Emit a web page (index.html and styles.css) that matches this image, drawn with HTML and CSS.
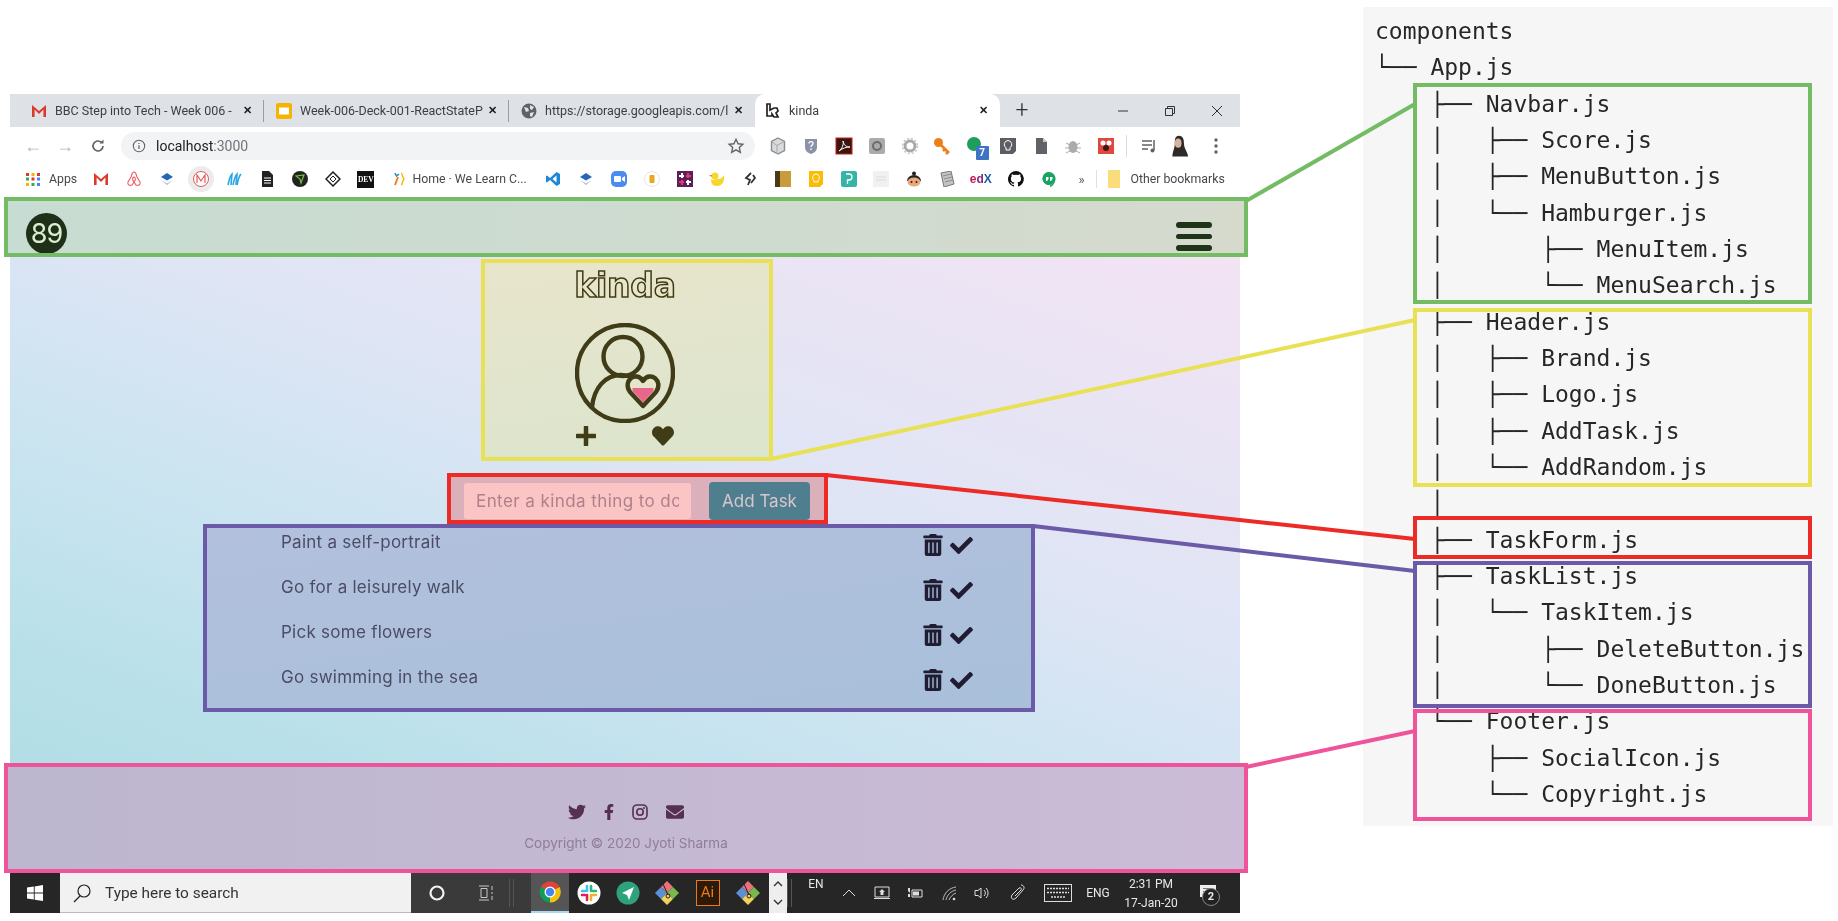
FILE: index.html
```html
<!DOCTYPE html>
<html lang="en">
<head>
<meta charset="utf-8">
<title>kinda component tree</title>
<link rel="stylesheet" href="styles.css">
</head>
<body>
<div class="stage">
  <div class="browser">
    <div class="tabs">
      <div class="tab tab1">
        <svg class="fav" viewBox="0 0 16 16"><path d="M1 14V2l7 6 7-6v12h-2.600V6.500L8 11 3.600 6.500V14z" fill="#d93a2b"/></svg>
        <span class="tab-title">BBC Step into Tech - Week 006 -</span><span class="tab-x">✕</span>
      </div>
      <div class="tab tab2">
        <svg class="fav" viewBox="0 0 16 16"><rect width="16" height="16" rx="2" fill="#f4b400"/><rect x="3" y="4.500" width="10" height="7" fill="#fff"/></svg>
        <span class="tab-title">Week-006-Deck-001-ReactStateP</span><span class="tab-x">✕</span>
      </div>
      <div class="tab tab3">
        <svg class="fav" viewBox="0 0 16 16"><circle cx="8" cy="8" r="7.500" fill="#5f6368"/><path d="M3 4l4 1 1 3-3 1zM9 2l4 2-2 3-2-1zM9 10l4-1-2 5-2-1z" fill="#dee1e6"/></svg>
        <span class="tab-title">https://storage.googleapis.com/l</span><span class="tab-x">✕</span>
      </div>
      <div class="tab tab-active">
        <svg class="fav" viewBox="0 0 16 16"><path d="M2 1h3v6l4-2h3l1 3-2 2 2 4H9L7 11v2H2z" fill="none" stroke="#222" stroke-width="1.700"/></svg>
        <span class="tab-title">kinda</span><span class="tab-x">✕</span>
      </div>
      <span class="tab-plus">+</span>
      <div class="winctl">
        <svg viewBox="0 0 14 14"><path d="M2 7h10" stroke="#333" fill="none"/></svg>
        <svg viewBox="0 0 14 14"><path d="M2.500 4.500h7v7h-7zM4.500 4.500v-2h7v7h-2" stroke="#333" fill="none"/></svg>
        <svg viewBox="0 0 14 14"><path d="M2 2l10 10M12 2L2 12" stroke="#333" fill="none"/></svg>
      </div>
    </div>

    <div class="toolbar">
      <span class="nav-btn muted">←</span>
      <span class="nav-btn muted">→</span>
      <svg class="nav-svg" viewBox="0 0 16 16"><path d="M13 8a5 5 0 1 1-1.500-3.600" fill="none" stroke="#5f6368" stroke-width="1.600"/><path d="M13.500 1.500v4h-4z" fill="#5f6368"/></svg>
      <div class="omnibox">
        <svg class="info" viewBox="0 0 16 16"><circle cx="8" cy="8" r="6.500" fill="none" stroke="#5f6368" stroke-width="1.200"/><path d="M8 7v4.500M8 4.500v1.300" stroke="#5f6368" stroke-width="1.400"/></svg>
        <span class="url">localhost<span class="url-port">:3000</span></span>
        <svg class="star" viewBox="0 0 24 24"><path d="M12 3l2.800 6 6.400.7-4.800 4.300 1.400 6.500L12 17.200 6.200 20.500 7.600 14 2.800 9.700 9.200 9z" fill="none" stroke="#5f6368" stroke-width="1.800"/></svg>
      </div>
      <div class="exts">
        <svg class="ext" viewBox="0 0 18 18"><path d="M9 1l6.500 3.500v9L9 17l-6.500-3.500v-9z" fill="#d8dadc" stroke="#8a8d90" stroke-width="1.400"/><path d="M8 8.500V17M2.500 4.500L8 8.500l7-4" fill="none" stroke="#a5a8ab"/></svg>
        <svg class="ext" viewBox="0 0 18 18"><path d="M3 2h12v8c0 4-3 6-6 7-3-1-6-3-6-7z" fill="#8a94a6"/><path d="M7 6.500c0-2.500 4-2.500 4 0 0 1.500-2 1.500-2 3.500M9 11.500v1.500" fill="none" stroke="#fff" stroke-width="1.400"/></svg>
        <svg class="ext" viewBox="0 0 18 18"><rect x="1" y="1" width="16" height="16" fill="#3a1613" stroke="#c91d17"/><path d="M4 14c3-2 5-7 4-10 1 4 3 6 7 6-4 0-7 1-11 4z" fill="none" stroke="#fff"/></svg>
        <svg class="ext" viewBox="0 0 18 18"><rect x="1" y="1" width="16" height="16" rx="2" fill="#a9abad"/><path d="M5 9a4 4 0 0 1 8 0M13 9a4 4 0 0 1-8 0" fill="none" stroke="#6a6c6e" stroke-width="2"/></svg>
        <svg class="ext" viewBox="0 0 18 18"><circle cx="9" cy="9" r="5" fill="none" stroke="#a8a8a8" stroke-width="3"/><circle cx="9" cy="9" r="7.500" fill="none" stroke="#c4c4c4" stroke-width="1.500" stroke-dasharray="2 2"/></svg>
        <svg class="ext" viewBox="0 0 18 18"><circle cx="5.500" cy="5.500" r="4.500" fill="#ef7d1a"/><path d="M8 8l8 8M12 12l-2 2M15 15l-2 2" stroke="#ef7d1a" stroke-width="2.600" fill="none"/></svg>
        <span class="ext-badge"><svg class="ext" viewBox="0 0 18 18"><circle cx="8" cy="7" r="7" fill="#1e9e5a"/></svg><span class="badge">7</span></span>
        <svg class="ext" viewBox="0 0 18 18"><path d="M1 1h16v13l-3 3H1z" fill="#5b5f63"/><path d="M9 3.500a4 4 0 0 1 2 7.300V13H7v-2.200a4 4 0 0 1 2-7.300z" fill="none" stroke="#fff"/></svg>
        <svg class="ext" viewBox="0 0 18 18"><path d="M4 1h7l4 4v12H4z" fill="#5f6368"/><path d="M11 1v4h4" fill="#c8cacc"/></svg>
        <svg class="ext" viewBox="0 0 18 18"><ellipse cx="9" cy="10" rx="4.500" ry="6" fill="#a9abad"/><path d="M2 6l4 2M16 6l-4 2M1 11h4M17 11h-4M2 16l4-2M16 16l-4-2" stroke="#a9abad"/></svg>
        <svg class="ext" viewBox="0 0 18 18"><rect x="1" y="1" width="16" height="16" fill="#e2473f"/><circle cx="6" cy="6" r="2.500" fill="#fff"/><circle cx="12" cy="6" r="2.500" fill="#fff"/><circle cx="9" cy="11" r="3" fill="#3a1a18"/></svg>
      </div>
      <span class="tool-sep"></span>
      <svg class="tool-ico" viewBox="0 0 18 18"><path d="M2 4h10M2 8h10M2 12h6" stroke="#5f6368" stroke-width="1.500" fill="none"/><path d="M14 3v10" stroke="#5f6368" stroke-width="1.500"/><circle cx="12.500" cy="13.500" r="2" fill="#5f6368"/></svg>
      <svg class="avatar" viewBox="0 0 24 28"><path d="M12 1c5 0 6 5 6 10 0 5 4 9 5 15H4c0-6 3-10 3-15 0-5 0-10 5-10z" fill="#2f2a28"/><ellipse cx="11" cy="10" rx="4" ry="5.500" fill="#d6b49e"/></svg>
      <svg class="tool-dots" viewBox="0 0 6 18"><circle cx="3" cy="3" r="1.700" fill="#5f6368"/><circle cx="3" cy="9" r="1.700" fill="#5f6368"/><circle cx="3" cy="15" r="1.700" fill="#5f6368"/></svg>
    </div>

    <div class="bookmarks">
      <svg class="bm bm-first" viewBox="0 0 16 16"><path d="M1 2h3v3H1z" fill="#e0382c"/><path d="M6.500 2h3v3h-3z" fill="#f4b400"/><path d="M12 2h3v3h-3z" fill="#e0382c"/><path d="M1 6.500h3v3H1z" fill="#34a853"/><path d="M6.500 6.500h3v3h-3z" fill="#e0382c"/><path d="M12 6.500h3v3h-3z" fill="#4285f4"/><path d="M1 12h3v3H1z" fill="#f4b400"/><path d="M6.500 12h3v3h-3z" fill="#34a853"/><path d="M12 12h3v3h-3z" fill="#4285f4"/></svg>
      <span class="bm-text bm-apps">Apps</span>
      <svg class="bm" viewBox="0 0 16 16"><path d="M1 14V2l7 6 7-6v12h-2.600V6.500L8 11 3.600 6.500V14z" fill="#d93a2b"/></svg>
      <svg class="bm" viewBox="0 0 16 16"><path d="M8 1c-2 0-2 2-3 5L2 11c-1 3 2 4 4 3l2-3 2 3c2 1 5 0 4-3l-3-5c-1-3-1-5-3-5zM8 6c2 0 1.500 4 0 5-1.500-1-2-5 0-5z" fill="none" stroke="#ef5a60" stroke-width="1.100"/></svg>
      <svg class="bm" viewBox="0 0 16 16"><path d="M8 2l6 4-6 3.500L2 6z" fill="#2566b8"/><path d="M2 9l6 5 6-5-6 3.500z" fill="#9fb9d8"/></svg>
      <span class="bm-round"><svg class="bm-m" viewBox="0 0 18 18"><circle cx="9" cy="9" r="7.500" fill="#fff" stroke="#e35a5a"/><path d="M5 13V5l4 6 4-6v8" fill="none" stroke="#e35a5a" stroke-width="1.200"/></svg></span>
      <svg class="bm" viewBox="0 0 16 16"><path d="M2 14c1-5 2-9 4-11 0 3-1 8-1 11M7 14c1-5 2-9 4-11 0 3-1 8-1 11M11 14c1-5 2-9 4-11" fill="none" stroke="#2ba7e0" stroke-width="1.600"/></svg>
      <svg class="bm" viewBox="0 0 16 16"><path d="M3 0h7l4 4v12H3z" fill="#222"/><path d="M5 7h7M5 9.500h7M5 12h7" stroke="#fff"/></svg>
      <svg class="bm" viewBox="0 0 16 16"><circle cx="8" cy="8" r="8" fill="#222"/><path d="M4 5l8-1-3 8-1-4z" fill="none" stroke="#7ac142" stroke-width="1.200"/></svg>
      <svg class="bm" viewBox="0 0 16 16"><path d="M8 1l7 7-7 7-7-7z" fill="none" stroke="#222" stroke-width="1.500"/><path d="M8 5l3 3-3 3-3-3z" fill="none" stroke="#222"/></svg>
      <span class="bm-dev">DEV</span>
      <svg class="bm" viewBox="0 0 16 16"><path d="M5 2l1.500 3L9 3" fill="none" stroke="#1a8fc4" stroke-width="1.500"/><path d="M8 6L5 14" stroke="#ef7d1a" stroke-width="2"/><path d="M11 2c2 1 1 4 3 6-2 2-1 5-3 6" fill="none" stroke="#f4b400" stroke-width="1.300"/></svg>
      <span class="bm-text bm-home">Home · We Learn C...</span>
      <svg class="bm" viewBox="0 0 16 16"><path d="M11.500 1L15 3v10l-3.500 2L5 9l-3 2.500L1 11V5l1-.5L5 7zM11.500 4.500L7.500 8l4 3.500z" fill="#1e88d6"/></svg>
      <svg class="bm" viewBox="0 0 16 16"><path d="M8 2l6 4-6 3.500L2 6z" fill="#2566b8"/><path d="M2 9l6 5 6-5-6 3.500z" fill="#9fb9d8"/></svg>
      <svg class="bm" viewBox="0 0 16 16"><rect width="16" height="16" rx="5" fill="#4a8cf0"/><rect x="3" y="5" width="7" height="6" rx="1" fill="#fff"/><path d="M11 7l3-2v6l-3-2z" fill="#fff"/></svg>
      <svg class="bm" viewBox="0 0 16 16"><circle cx="8" cy="8" r="7.500" fill="#fff" stroke="#e8e8e8"/><rect x="5.500" y="4" width="5" height="8" rx="1" fill="#e9a91f"/></svg>
      <svg class="bm" viewBox="0 0 16 16"><rect width="16" height="16" fill="#5c1f5e"/><path d="M5 2v5M2 5h5M11 9v5M9 11h5" stroke="#fff" stroke-width="2"/><path d="M11 2v5M9 5h5M5 9v5M2 11h5" stroke="#e23a6b" stroke-width="2"/></svg>
      <svg class="bm" viewBox="0 0 16 16"><circle cx="6" cy="5" r="3.500" fill="#f7d72c"/><path d="M2 8c3 2 4 0 6 0s5 0 7-4c1 7-2 11-7 11S2 12 2 8z" fill="#f7d72c"/><path d="M3 4H0l2.500 2z" fill="#ef7d1a"/></svg>
      <svg class="bm" viewBox="0 0 16 16"><path d="M9 2L4 7l4 2-2 5M11 4l2 3-4 5" fill="none" stroke="#333" stroke-width="1.800"/></svg>
      <svg class="bm" viewBox="0 0 16 16"><rect width="16" height="16" fill="#4b3a16"/><path d="M5 0h11v16H5z" fill="#c89b3c"/></svg>
      <svg class="bm" viewBox="0 0 16 16"><path d="M1 0h14v13l-3 3H1z" fill="#fbbc04"/><path d="M8 3a3.500 3.500 0 0 1 2 6.300V11H6V9.300A3.500 3.500 0 0 1 8 3z" fill="none" stroke="#fff"/></svg>
      <svg class="bm" viewBox="0 0 16 16"><rect width="16" height="16" rx="2" fill="#35b5a8"/><path d="M5 3h3c4 0 4 6 0 6H6.500v4" fill="none" stroke="#fff" stroke-width="1.300"/></svg>
      <svg class="bm" viewBox="0 0 16 16"><rect width="16" height="16" fill="#f1f1f1"/><path d="M3 6h10M3 9h10" stroke="#ddd"/></svg>
      <svg class="bm" viewBox="0 0 16 16"><circle cx="8" cy="2.500" r="2" fill="#222"/><path d="M1 10a7 6 0 0 1 14 0z" fill="#222"/><ellipse cx="8" cy="11" rx="6.500" ry="4.500" fill="#e8a87c"/><circle cx="5.500" cy="11" r="1" fill="#222"/><circle cx="10.500" cy="11" r="1" fill="#222"/></svg>
      <svg class="bm" viewBox="0 0 16 16"><path d="M2 2l10-2 3 13-10 3z" fill="#c4c4c4" stroke="#777"/><path d="M4 5l8-2M5 8l8-2M6 11l8-2" stroke="#8a8a8a"/></svg>
      <span class="bm-edx"><span class="edx-e">e</span><span class="edx-d">d</span><span class="edx-x">X</span></span>
      <svg class="bm" viewBox="0 0 16 16"><path d="M8 0a8 8 0 0 0-2.500 15.600c.4.100.5-.2.500-.4v-1.400c-2.200.500-2.700-1-2.700-1-.4-.9-.9-1.200-.9-1.200-.7-.5.100-.5.100-.5.800.100 1.200.8 1.200.8.700 1.200 1.900.9 2.300.7.100-.5.300-.9.500-1.100-1.800-.2-3.600-.9-3.600-4 0-.9.300-1.600.8-2.100-.1-.2-.4-1 .1-2.100 0 0 .7-.2 2.200.8a7.500 7.500 0 0 1 4 0c1.500-1 2.200-.8 2.200-.8.400 1.100.2 1.900.1 2.100.5.600.8 1.300.8 2.100 0 3.100-1.900 3.700-3.600 3.900.3.200.5.700.5 1.500v2.200c0 .2.100.5.600.4A8 8 0 0 0 8 0z" fill="#111"/></svg>
      <svg class="bm" viewBox="0 0 16 16"><path d="M8 1a6.500 6.500 0 0 1 1 12.900V16c3-1 5.500-4 5.500-8.500A6.500 6.500 0 0 0 8 1a6.500 6.500 0 0 0 0 13z" fill="#1aa260"/><circle cx="8" cy="7.500" r="6.500" fill="#1aa260"/><path d="M5 6h2.500v2L6 10H5zM9 6h2.500v2L10 10H9z" fill="#fff"/></svg>
      <span class="bm-more">»</span>
      <span class="bm-sep"></span>
      <svg class="bm-folder" viewBox="0 0 14 20"><path d="M1 1h12v17a1 1 0 0 1-1 1H2a1 1 0 0 1-1-1z" fill="#fbdc7a"/></svg>
      <span class="bm-text">Other bookmarks</span>
    </div>

    <div class="page">
      <nav class="navbar">
        <div class="score">89</div>
        <div class="hamburger"><span></span><span></span><span></span></div>
      </nav>

      <header class="hero">
        <div class="brand">kinda</div>
        <svg class="emblem" viewBox="0 0 100 100">
          <circle cx="50" cy="50" r="48" fill="none" stroke="#403c18" stroke-width="4.400"/>
          <circle cx="48" cy="33.500" r="19.500" fill="none" stroke="#403c18" stroke-width="4.400"/>
          <path d="M17 84C19 65 30 52 46 52L60 54" fill="none" stroke="#403c18" stroke-width="4.400"/>
          <path d="M68 83L55 69C47 58 61 47 68 58C75 47 89 58 81 69z" fill="#e6e5c9" stroke="#403c18" stroke-width="4.400" stroke-linejoin="round"/>
          <path d="M57.500 65H78.500V68L68 79.500L57.500 68z" fill="#e8668a"/>
        </svg>
        <div class="hero-actions">
          <svg class="plus" viewBox="0 0 20 20"><path d="M10 1v18M1 10h18" stroke="#403c18" stroke-width="4.500" stroke-linecap="round"/></svg>
          <svg class="heart" viewBox="0 0 512 512"><path fill="#403c18" d="M462.300 62.600C407.500 15.900 326 24.300 275.700 76.200L256 96.500l-19.700-20.300C186.100 24.300 104.500 15.900 49.700 62.600c-62.800 53.600-66.100 149.800-9.900 207.900l193.500 199.800c12.500 12.900 32.800 12.900 45.300 0l193.500-199.800c56.300-58.100 53-154.300-9.800-207.900z"/></svg>
        </div>
      </header>

      <form class="task-form">
        <input class="task-input" type="text" placeholder="Enter a kinda thing to do">
        <button class="task-btn" type="button">Add Task</button>
      </form>

      <section class="task-list">
        <div class="task-item"><span class="task-name">Paint a self-portrait</span>
          <svg class="ico-trash" viewBox="0 0 448 512"><path d="M32 464a48 48 0 0 0 48 48h288a48 48 0 0 0 48-48V128H32zm272-256a16 16 0 0 1 32 0v224a16 16 0 0 1-32 0zm-96 0a16 16 0 0 1 32 0v224a16 16 0 0 1-32 0zm-96 0a16 16 0 0 1 32 0v224a16 16 0 0 1-32 0zM432 32H312l-9.400-18.700A24 24 0 0 0 281.100 0H166.800a23.720 23.720 0 0 0-21.400 13.300L136 32H16A16 16 0 0 0 0 48v32a16 16 0 0 0 16 16h416a16 16 0 0 0 16-16V48a16 16 0 0 0-16-16z"/></svg>
          <svg class="ico-check" viewBox="0 0 512 512"><path d="M173.898 439.404l-166.400-166.400c-9.997-9.997-9.997-26.206 0-36.204l36.203-36.204c9.997-9.998 26.207-9.998 36.204 0L192 312.690 432.095 72.596c9.997-9.997 26.207-9.997 36.204 0l36.203 36.204c9.997 9.997 9.997 26.206 0 36.204l-294.400 294.401c-9.998 9.997-26.207 9.997-36.204-.001z"/></svg>
        </div>
        <div class="task-item"><span class="task-name">Go for a leisurely walk</span>
          <svg class="ico-trash" viewBox="0 0 448 512"><path d="M32 464a48 48 0 0 0 48 48h288a48 48 0 0 0 48-48V128H32zm272-256a16 16 0 0 1 32 0v224a16 16 0 0 1-32 0zm-96 0a16 16 0 0 1 32 0v224a16 16 0 0 1-32 0zm-96 0a16 16 0 0 1 32 0v224a16 16 0 0 1-32 0zM432 32H312l-9.400-18.700A24 24 0 0 0 281.100 0H166.800a23.720 23.720 0 0 0-21.400 13.300L136 32H16A16 16 0 0 0 0 48v32a16 16 0 0 0 16 16h416a16 16 0 0 0 16-16V48a16 16 0 0 0-16-16z"/></svg>
          <svg class="ico-check" viewBox="0 0 512 512"><path d="M173.898 439.404l-166.400-166.400c-9.997-9.997-9.997-26.206 0-36.204l36.203-36.204c9.997-9.998 26.207-9.998 36.204 0L192 312.690 432.095 72.596c9.997-9.997 26.207-9.997 36.204 0l36.203 36.204c9.997 9.997 9.997 26.206 0 36.204l-294.400 294.401c-9.998 9.997-26.207 9.997-36.204-.001z"/></svg>
        </div>
        <div class="task-item"><span class="task-name">Pick some flowers</span>
          <svg class="ico-trash" viewBox="0 0 448 512"><path d="M32 464a48 48 0 0 0 48 48h288a48 48 0 0 0 48-48V128H32zm272-256a16 16 0 0 1 32 0v224a16 16 0 0 1-32 0zm-96 0a16 16 0 0 1 32 0v224a16 16 0 0 1-32 0zm-96 0a16 16 0 0 1 32 0v224a16 16 0 0 1-32 0zM432 32H312l-9.400-18.700A24 24 0 0 0 281.100 0H166.800a23.720 23.720 0 0 0-21.400 13.300L136 32H16A16 16 0 0 0 0 48v32a16 16 0 0 0 16 16h416a16 16 0 0 0 16-16V48a16 16 0 0 0-16-16z"/></svg>
          <svg class="ico-check" viewBox="0 0 512 512"><path d="M173.898 439.404l-166.400-166.400c-9.997-9.997-9.997-26.206 0-36.204l36.203-36.204c9.997-9.998 26.207-9.998 36.204 0L192 312.690 432.095 72.596c9.997-9.997 26.207-9.997 36.204 0l36.203 36.204c9.997 9.997 9.997 26.206 0 36.204l-294.400 294.401c-9.998 9.997-26.207 9.997-36.204-.001z"/></svg>
        </div>
        <div class="task-item"><span class="task-name">Go swimming in the sea</span>
          <svg class="ico-trash" viewBox="0 0 448 512"><path d="M32 464a48 48 0 0 0 48 48h288a48 48 0 0 0 48-48V128H32zm272-256a16 16 0 0 1 32 0v224a16 16 0 0 1-32 0zm-96 0a16 16 0 0 1 32 0v224a16 16 0 0 1-32 0zm-96 0a16 16 0 0 1 32 0v224a16 16 0 0 1-32 0zM432 32H312l-9.400-18.700A24 24 0 0 0 281.100 0H166.800a23.720 23.720 0 0 0-21.400 13.300L136 32H16A16 16 0 0 0 0 48v32a16 16 0 0 0 16 16h416a16 16 0 0 0 16-16V48a16 16 0 0 0-16-16z"/></svg>
          <svg class="ico-check" viewBox="0 0 512 512"><path d="M173.898 439.404l-166.400-166.400c-9.997-9.997-9.997-26.206 0-36.204l36.203-36.204c9.997-9.998 26.207-9.998 36.204 0L192 312.690 432.095 72.596c9.997-9.997 26.207-9.997 36.204 0l36.203 36.204c9.997 9.997 9.997 26.206 0 36.204l-294.400 294.401c-9.998 9.997-26.207 9.997-36.204-.001z"/></svg>
        </div>
      </section>

      <footer class="site-footer">
        <div class="socials">
          <svg class="soc-tw" viewBox="0 0 512 512"><path d="M459.370 151.716c.325 4.548.325 9.097.325 13.645 0 138.720-105.583 298.558-298.558 298.558-59.452 0-114.680-17.219-161.137-47.106 8.447.974 16.568 1.299 25.340 1.299 49.055 0 94.213-16.568 130.274-44.832-46.132-.975-84.792-31.188-98.112-72.772 6.498.974 12.995 1.624 19.818 1.624 9.421 0 18.843-1.300 27.614-3.573-48.081-9.747-84.143-51.980-84.143-102.985v-1.299c13.969 7.797 30.214 12.670 47.431 13.319-28.264-18.843-46.781-51.005-46.781-87.391 0-19.492 5.197-37.360 14.294-52.954 51.655 63.675 129.300 105.258 216.365 109.807-1.624-7.797-2.599-15.918-2.599-24.040 0-57.828 46.782-104.934 104.934-104.934 30.213 0 57.502 12.670 76.670 33.137 23.715-4.548 46.456-13.320 66.599-25.340-7.798 24.366-24.366 44.833-46.132 57.827 21.117-2.273 41.584-8.122 60.426-16.243-14.292 20.791-32.161 39.308-52.628 54.253z"/></svg>
          <svg class="soc-fb" viewBox="0 0 320 512"><path d="M279.140 288l14.220-92.660h-88.910v-60.130c0-25.350 12.420-50.060 52.240-50.060h40.420V6.260S260.430 0 225.360 0c-73.220 0-121.080 44.380-121.080 124.720v70.620H22.890V288h81.390v224h100.170V288z"/></svg>
          <svg class="soc-ig" viewBox="0 0 16 16"><rect x="1" y="1" width="14" height="14" rx="4" fill="none" stroke="#55304f" stroke-width="1.600"/><circle cx="8" cy="8" r="3.200" fill="none" stroke="#55304f" stroke-width="1.600"/><circle cx="12" cy="4" r="1" fill="#55304f"/></svg>
          <svg class="soc-em" viewBox="0 0 512 512"><path d="M502.300 190.800c3.900-3.100 9.700-.2 9.700 4.700V400c0 26.500-21.500 48-48 48H48c-26.500 0-48-21.500-48-48V195.600c0-5 5.700-7.800 9.700-4.700 22.400 17.400 52.100 39.500 154.100 113.600 21.100 15.400 56.700 47.800 92.200 47.600 35.700.3 72-32.800 92.300-47.600 102-74.100 131.600-96.300 154-113.700zM256 320c23.200.4 56.600-29.200 73.400-41.400 132.700-96.300 142.800-104.700 173.400-128.700 5.800-4.500 9.200-11.500 9.200-18.900v-19c0-26.500-21.500-48-48-48H48C21.500 64 0 85.500 0 112v19c0 7.400 3.400 14.300 9.200 18.900 30.600 23.900 40.700 32.400 173.400 128.700 16.800 12.200 50.200 41.800 73.400 41.400z"/></svg>
        </div>
        <p class="copyright">Copyright © 2020 Jyoti Sharma</p>
      </footer>
    </div>

    <div class="taskbar">
      <div class="tb-start"><svg viewBox="0 0 16 16"><path d="M0 2.500l6.800-1v6H0zM7.700 1.400L16 0v7.500H7.700zM0 8.400h6.800v6L0 13.400zM7.700 8.400H16V16l-8.300-1.200z" fill="#fff"/></svg></div>
      <div class="tb-search">
        <svg viewBox="0 0 20 20"><circle cx="12" cy="8" r="6" fill="none" stroke="#222" stroke-width="1.200"/><path d="M8 13l-6 6" stroke="#222" stroke-width="1.200"/></svg>
        <span>Type here to search</span>
      </div>
      <div class="tb-mid">
        <div class="tb-cell w52"><svg class="i16" viewBox="0 0 16 16"><circle cx="8" cy="8" r="6.500" fill="none" stroke="#f2f2f2" stroke-width="2.200"/></svg></div>
        <div class="tb-cell w46"><svg class="i16" viewBox="0 0 16 16"><path d="M1 1h10M1 15h10M3 3.500h6v9H3zM14 1v4M14 7v2M14 11v4" fill="none" stroke="#c8c8c8"/></svg></div>
        <span class="tb-sep w22"></span>
      </div>
      <div class="tb-cell w38 tb-active"><svg class="i24" viewBox="0 0 24 24"><path d="M12 12L3 7a10.500 10.500 0 0 1 18.500 0z" fill="#db4437"/><path d="M12 12l9.500-5a10.500 10.500 0 0 1-9.500 15.500z" fill="#f4c20d"/><path d="M12 22.500A10.500 10.500 0 0 1 3 7l9 5z" fill="#0f9d58"/><circle cx="12" cy="12" r="5.500" fill="#fff"/><circle cx="12" cy="12" r="4.200" fill="#4285f4"/></svg></div>
      <div class="tb-cell w40"><svg class="i24" viewBox="0 0 24 24"><circle cx="12" cy="12" r="11.500" fill="#fff"/><path d="M10 5v5M5 10h3" stroke="#36c5f0" stroke-width="2.600" stroke-linecap="round"/><path d="M14 5v5M19 10h-3" stroke="#2eb67d" stroke-width="2.600" stroke-linecap="round"/><path d="M14 19v-5M19 14h-3" stroke="#ecb22e" stroke-width="2.600" stroke-linecap="round"/><path d="M10 19v-5M5 14h3" stroke="#e01e5a" stroke-width="2.600" stroke-linecap="round"/></svg></div>
      <div class="tb-cell w38"><svg class="i24" viewBox="0 0 24 24"><circle cx="12" cy="12" r="11.500" fill="#2ea27c"/><path d="M6 12l12-6-5 13-2-5z" fill="#fff"/></svg></div>
      <div class="tb-cell w40"><svg class="i24" viewBox="0 0 24 24"><path d="M12 0l6 6-6 6-6-6z" fill="#e8727a"/><path d="M6 6l6 6-6 6-6-6z" fill="#5b8fd8"/><path d="M18 6l6 6-6 6-6-6z" fill="#79b84e"/><path d="M12 12l6 6-6 6-6-6z" fill="#f2d25f"/><path d="M8 3l5 11" stroke="#222"/><circle cx="13" cy="15" r="2" fill="none" stroke="#222"/></svg></div>
      <div class="tb-cell w41"><span class="ai">Ai</span></div>
      <div class="tb-cell w39"><svg class="i24" viewBox="0 0 24 24"><path d="M12 0l6 6-6 6-6-6z" fill="#e8727a"/><path d="M6 6l6 6-6 6-6-6z" fill="#5b8fd8"/><path d="M18 6l6 6-6 6-6-6z" fill="#79b84e"/><path d="M12 12l6 6-6 6-6-6z" fill="#f2d25f"/><path d="M8 3l5 11" stroke="#222"/><circle cx="13" cy="15" r="2" fill="none" stroke="#222"/></svg></div>
      <div class="tb-scroll">
        <svg viewBox="0 0 10 6"><path d="M1 5l4-4 4 4" fill="none" stroke="#333" stroke-width="1.400"/></svg>
        <svg viewBox="0 0 10 6"><path d="M1 1l4 4 4-4" fill="none" stroke="#333" stroke-width="1.400"/></svg>
      </div>
      <span class="tb-sep w13"></span>
      <div class="tb-cell w32 tb-en">EN</div>
      <div class="tb-cell w34"><svg class="i16" viewBox="0 0 16 16"><path d="M2 11l6-6 6 6" fill="none" stroke="#ddd"/></svg></div>
      <div class="tb-cell w32"><svg class="i16" viewBox="0 0 16 16"><path d="M1 2h14v10H1zM0 13.500h16" fill="none" stroke="#ddd"/><path d="M8 4l3 3H9.500v3h-3V7H5z" fill="#ddd"/></svg></div>
      <div class="tb-cell w34"><svg class="i16" viewBox="0 0 16 16"><path d="M5 5h10v7H5z" fill="none" stroke="#ddd"/><path d="M6 6.500h6v4H6zM1 3v3l2 2V3zM1 9h2v3H1z" fill="#ddd"/></svg></div>
      <div class="tb-cell w34"><svg class="i16" viewBox="0 0 16 16"><path d="M15 2C8 3 3 8 2 15M15 5C10 6 6 10 5 15M15 8c-3 1-6 4-7 7" fill="none" stroke="#bbb"/><circle cx="13" cy="14" r="1.300" fill="#ddd"/></svg></div>
      <div class="tb-cell w31"><svg class="i16" viewBox="0 0 16 16"><path d="M1 5.500h3L7 3v10l-3-2.500H1zM10 5a4 4 0 0 1 0 6M12 3a7 7 0 0 1 0 10" fill="none" stroke="#ddd"/></svg></div>
      <div class="tb-cell w42"><svg class="i18" viewBox="0 0 18 18"><path d="M12 1c3 0 4 3 2 5L7 14c-3 3-6 0-4-3l7-7c2-1 3 1 2 2l-6 6" fill="none" stroke="#ddd"/></svg></div>
      <div class="tb-cell w38"><svg class="kbd" viewBox="0 0 28 18"><rect x=".5" y=".5" width="27" height="17" fill="none" stroke="#ddd"/><path d="M3 4.500h22M3 8.500h22M7 13h14" stroke="#ddd" stroke-width="1.600" stroke-dasharray="2 1"/></svg></div>
      <div class="tb-cell w42 tb-lang">ENG</div>
      <div class="tb-clock w64"><span>2:31 PM</span><span>17-Jan-20</span></div>
      <div class="tb-cell w50 tb-notif"><svg class="i18" viewBox="0 0 18 18"><path d="M1 1h16v12H8l-3 4v-4H1z" fill="#eee"/><path d="M4 4.500h10M4 7.500h10M4 10.500h10" stroke="#777"/></svg><span class="notif-num">2</span></div>
    </div>
  </div>

  <aside class="tree">
<pre class="tree-text">components
└── App.js
    ├── Navbar.js
    │   ├── Score.js
    │   ├── MenuButton.js
    │   └── Hamburger.js
    │       ├── MenuItem.js
    │       └── MenuSearch.js
    ├── Header.js
    │   ├── Brand.js
    │   ├── Logo.js
    │   ├── AddTask.js
    │   └── AddRandom.js
    │
    ├── TaskForm.js
    ├── TaskList.js
    │   └── TaskItem.js
    │       ├── DeleteButton.js
    │       └── DoneButton.js
    └── Footer.js
        ├── SocialIcon.js
        └── Copyright.js</pre>
    <div class="mark mark-green"></div>
    <div class="mark mark-yellow"></div>
    <div class="mark mark-red"></div>
    <div class="mark mark-purple"></div>
    <div class="mark mark-pink"></div>
  </aside>

  <svg class="connectors" viewBox="0 0 1838 921">
    <path d="M1246 201L1415 104" stroke="#74bc64"/>
    <path d="M771 459L1415 320" stroke="#e8e155"/>
    <path d="M826 475L1415 539" stroke="#ec2a26"/>
    <path d="M1033 526L1415 571" stroke="#6a5aa8"/>
    <path d="M1246 767L1415 731" stroke="#ef5399"/>
  </svg>
</div>
</body>
</html>
```

FILE: styles.css
```css
* { box-sizing: border-box; }
html, body { margin: 0; padding: 0; background: #fff; }
body { width: 1838px; height: 921px; overflow: hidden; font-family: "Roboto", "Liberation Sans", sans-serif; }
.stage { position: relative; display: flex; align-items: flex-start; width: 1838px; height: 921px; filter: blur(.35px); }

/* browser */
.browser { width: 1230px; margin: 94px 0 0 10px; display: flex; flex-direction: column; flex: none; }
.tabs { display: flex; align-items: center; height: 33px; background: #dee1e6; position: relative; }
.tab { display: flex; align-items: center; height: 33px; flex: none; font-size: 12.500px; color: #3c4043; }
.tab-title { flex: 1; overflow: hidden; white-space: nowrap; min-width: 0; }
.tab-x { font-size: 11px; color: #222; width: 14px; text-align: center; font-weight: 700; }
.fav { width: 16px; height: 16px; flex: none; margin-right: 8px; }
.tab1 { width: 254px; padding: 0 9px 0 21px; border-right: 1px solid #9a9da1; height: 22px; }
.tab2 { width: 245px; padding: 0 9px 0 12px; border-right: 1px solid #9a9da1; height: 22px; }
.tab3 { width: 246px; padding: 0 10px 0 12px; }
.tab-active { width: 245px; padding: 0 10px 0 10px; background: #fff; border-radius: 10px 10px 0 0; margin-right: 14px; }
.tab-plus { font-size: 23px; font-weight: 300; color: #333; width: 16px; text-align: center; line-height: 1; }
.winctl { margin-left: auto; display: flex; gap: 33px; padding-right: 16px; }
.winctl svg { width: 14px; height: 14px; }

.toolbar { display: flex; align-items: center; height: 39px; padding: 0 0 1px 7px; background: #fff; }
.nav-btn { width: 32px; text-align: center; font-size: 18px; color: #5f6368; flex: none; line-height: 1; }
.nav-btn.muted { color: #b4b7bb; }
.nav-svg { width: 16px; height: 16px; margin: 0 0 0 9px; flex: none; }
.omnibox { display: flex; align-items: center; width: 634px; height: 28px; margin-left: 15px; background: #f1f3f4; border-radius: 14px; padding: 0 10px 0 11px; flex: none; }
.info { width: 14px; height: 14px; margin-right: 10px; }
.url { font-size: 14px; color: #202124; flex: 1; }
.url-port { color: #70757a; }
.star { width: 18px; height: 18px; }
.exts { display: flex; align-items: center; margin-left: 7px; flex: none; }
.ext { width: 18px; height: 18px; margin: 0 7.400px; flex: none; }
.ext-badge { position: relative; display: flex; }
.badge { position: absolute; left: 17px; top: 9px; width: 13px; height: 14px; background: #3f74c4; color: #fff; font-size: 10px; font-weight: 700; text-align: center; line-height: 14px; border-radius: 1px; }
.tool-sep { width: 1px; height: 22px; background: #dadce0; margin: 0 13px 0 3px; flex: none; }
.tool-ico { width: 18px; height: 18px; flex: none; }
.avatar { width: 20px; height: 25px; margin-left: 11px; flex: none; }
.tool-dots { width: 6px; height: 18px; margin-left: 24px; flex: none; }

.bookmarks { display: flex; align-items: center; height: 31px; padding: 0 0 5px 15px; background: #fff; white-space: nowrap; }
.bm { width: 16px; height: 16px; flex: none; margin-right: 16.800px; }
.bm-first { margin-right: 8px; }
.bm-text { font-size: 12.300px; color: #45494d; flex: none; }
.bm-apps { width: 44px; }
.bm-round { width: 26px; height: 26px; border-radius: 50%; background: #ececec; display: flex; align-items: center; justify-content: center; margin: 0 11.800px 0 -3px; flex: none; }
.bm-m { width: 18px; height: 18px; }
.bm-dev { width: 17px; height: 17px; background: #111; color: #fff; font: 700 7.500px/17px "Liberation Serif", serif; text-align: center; margin-right: 15.800px; flex: none; }
.bm-home { width: 133px; margin-left: -10.500px; }
.bm-edx { width: 24px; margin: 0 14px 0 -2px; font: 700 12px/1 "Liberation Sans", sans-serif; flex: none; }
.edx-e { color: #c2185b; } .edx-d { color: #8a2a7a; } .edx-x { color: #1b5fa8; }
.bm-more { width: 16px; font-size: 13px; color: #555; text-align: center; flex: none; }
.bm-sep { width: 1px; height: 18px; background: #e0e0e0; margin: 0 10px 0 7px; flex: none; }
.bm-folder { width: 14px; height: 20px; margin-right: 9px; flex: none; }

/* page */
.page { height: 676px; display: flex; flex-direction: column; background: linear-gradient(200deg, #f6e3f3 0%, #dfe5f5 40%, #c9e4f0 62%, #b8e0e8 80%, #aedce3 100%); }

.navbar { flex: none; width: 1244px; height: 60px; margin-left: -6px; border: 4px solid #74bc64; overflow: hidden; display: flex; justify-content: space-between; align-items: flex-start; padding: 12px 32px 0 18px; background: linear-gradient(to right, #c7dcd2, #d5dacd); position: relative; }
.score { width: 41px; height: 41px; border-radius: 50%; background: #1f2f18; color: #d9efd2; font: 400 27px/41px "Inter", sans-serif; letter-spacing: -1px; text-align: center; }
.hamburger { width: 36px; margin-top: 9px; display: flex; flex-direction: column; gap: 6px; }
.hamburger span { height: 5.500px; border-radius: 3px; background: #1f3318; }

.hero { flex: none; width: 292px; height: 202px; margin: 2px 0 0 471px; padding: 4px 4px 0 0; border: 4px solid #e8e155; display: flex; flex-direction: column; align-items: center; background: linear-gradient(172deg, #e8e5cc, #dce5cd); }
.brand { font: 700 33px/38px "DejaVu Sans", sans-serif; color: #e8e6cb; -webkit-text-stroke: 1.500px #403c18; letter-spacing: -.2px; }
.emblem { width: 100px; height: 100px; margin-top: 18px; flex: none; }
.hero-actions { width: 98px; height: 22px; margin-top: 2px; display: flex; justify-content: space-between; align-items: center; }
.plus { width: 20px; height: 20px; }
.heart { width: 22px; height: 22px; }

.task-form { flex: none; width: 381px; height: 51px; margin: 12px 0 0 437px; border: 4px solid #ec2a26; display: flex; align-items: flex-start; padding: 0 14px 0 13px; background: #dcb0bb; }
.task-input { width: 227px; height: 36px; margin-top: 6px; border: 0; border-radius: 3px; background: #fcc5c5; padding: 0 12px; font: 400 17px "Inter", sans-serif; letter-spacing: .42px; outline: none; flex: none; }
.task-input::placeholder { color: #af8089; opacity: 1; }
.task-btn { width: 101px; height: 38px; margin: 5px 0 0 18px; border: 0; border-radius: 4px; background: #4f7f8f; color: #d9c6cd; font: 400 17px "Inter", sans-serif; flex: none; padding: 0; }

.task-list { flex: none; width: 832px; height: 188px; margin-left: 193px; border: 4px solid #6a5aa8; padding-top: 3px; background: linear-gradient(172deg, #b2c0dd, #a9c0da); }
.task-item { display: flex; align-items: flex-start; height: 45px; padding-left: 74px; }
.task-name { width: 642px; font: 400 17px/22px "Inter", sans-serif; color: #4b4c66; letter-spacing: .26px; }
.ico-trash { width: 20px; height: 22px; margin-top: 3px; fill: #1f1c33; flex: none; }
.ico-check { width: 23px; height: 23px; margin: 3px 0 0 7px; fill: #1f1c33; flex: none; }

.site-footer { flex: none; width: 1244px; height: 110px; margin: auto 0 0 -6px; border: 4px solid #ef5399; padding-top: 35px; display: flex; flex-direction: column; align-items: center; background: linear-gradient(to right, #bcb6ce, #cbbbd7); }
.socials { display: flex; align-items: center; height: 20px; gap: 18px; }
.socials svg { fill: #55304f; flex: none; }
.soc-tw { width: 18px; height: 18px; }
.soc-fb { width: 10px; height: 18px; }
.soc-ig { width: 16px; height: 16px; }
.soc-em { width: 18px; height: 18px; }
.copyright { margin: 12px 0 0; font: 400 13.500px/18px "Inter", sans-serif; color: #8f7c9c; }

/* taskbar */
.taskbar { display: flex; align-items: center; height: 40px; background: #262626; color: #e8e8e8; }
.tb-start { width: 50px; height: 40px; display: flex; align-items: center; justify-content: center; flex: none; }
.tb-start svg { width: 16px; height: 16px; }
.tb-search { width: 351px; height: 40px; display: flex; align-items: center; padding-left: 12px; background: #f1f1f1; color: #333; font-size: 15.400px; flex: none; border-bottom: 1px solid #bbb; }
.tb-search svg { width: 20px; height: 20px; margin-right: 13px; }
.tb-mid { display: flex; align-items: center; height: 40px; flex: none; background: #3a3a3a; }
.tb-cell { height: 40px; display: flex; align-items: center; justify-content: center; flex: none; }
.tb-sep { height: 32px; flex: none; position: relative; }
.tb-sep::after { content: ""; position: absolute; left: 0; top: 2px; bottom: 2px; width: 3px; border-left: 1px solid #555; border-right: 1px solid #555; }
.w13 { width: 13px; } .w22 { width: 22px; } .w31 { width: 31px; } .w32 { width: 32px; } .w34 { width: 34px; }
.w38 { width: 38px; } .w39 { width: 39px; } .w40 { width: 40px; } .w41 { width: 41px; } .w42 { width: 42px; }
.w46 { width: 46px; } .w50 { width: 50px; } .w52 { width: 52px; } .w64 { width: 64px; }
.i16 { width: 16px; height: 16px; } .i18 { width: 18px; height: 18px; } .i24 { width: 24px; height: 24px; }
.kbd { width: 28px; height: 18px; }
.tb-active { background: #555; border-bottom: 2px solid #a9d6f0; }
.ai { width: 24px; height: 26px; border: 1.500px solid #e8791d; background: #2e1a08; color: #e8791d; font: 400 15px/23px "Roboto", sans-serif; text-align: center; }
.tb-scroll { width: 18px; height: 40px; margin-left: 2px; background: #eee; display: flex; flex-direction: column; justify-content: space-between; align-items: center; padding: 8px 0; flex: none; }
.tb-scroll svg { width: 10px; height: 6px; }
.tb-en { font-size: 12px; align-items: flex-start; padding-top: 4px; }
.tb-lang { font-size: 12px; }
.tb-clock { height: 40px; display: flex; flex-direction: column; align-items: center; justify-content: center; gap: 5px; font-size: 12px; line-height: 14px; flex: none; }
.tb-notif { position: relative; }
.notif-num { position: absolute; left: 19px; top: 15px; width: 18px; height: 18px; border-radius: 50%; background: #222; border: 1px solid #888; font-size: 11px; font-weight: 700; line-height: 16px; text-align: center; }

/* tree */
.tree { position: relative; flex: none; width: 470px; height: 819px; margin: 7px 0 0 123px; padding: 6px 0 0 12px; background: #f6f6f6; }
.tree-text { margin: 0; font: 400 23px/36.330px "DejaVu Sans Mono", "Liberation Mono", monospace; color: #262626; }
.mark { position: absolute; left: 50px; width: 399px; border: 4px solid; }
.mark-green { top: 76px; height: 221px; border-color: #74bc64; }
.mark-yellow { top: 301px; height: 179px; border-color: #e8e155; }
.mark-red { top: 509px; height: 43px; border-color: #ec2a26; }
.mark-purple { top: 554px; height: 147px; border-color: #6a5aa8; }
.mark-pink { top: 702px; height: 112px; border-color: #ef5399; }

.connectors { position: absolute; left: 0; top: 0; width: 1838px; height: 921px; pointer-events: none; }
.connectors path { stroke-width: 4; fill: none; }
```
